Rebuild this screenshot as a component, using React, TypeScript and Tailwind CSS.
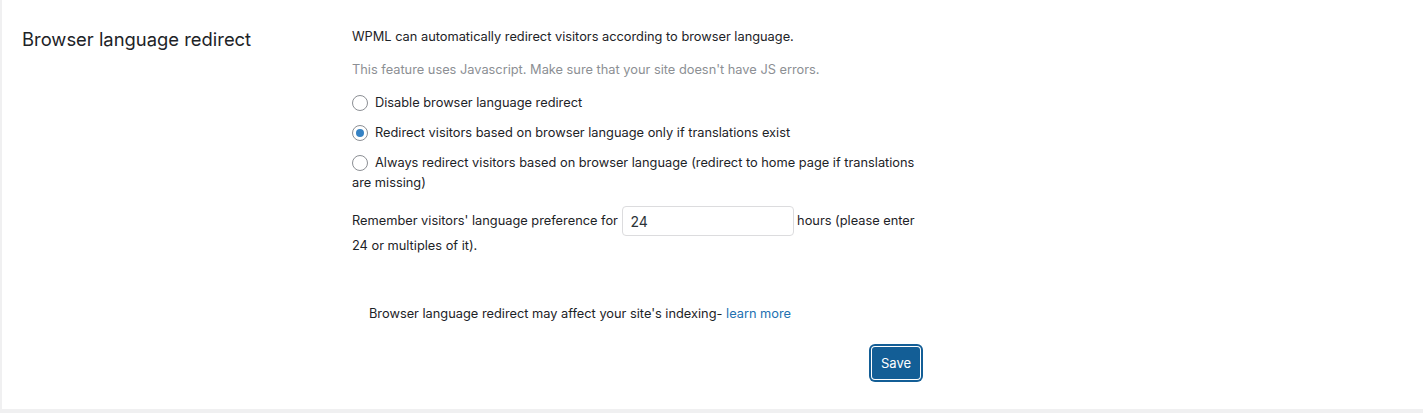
import React, { useState } from "react";

const options = [
  { id: "disable", label: "Disable browser language redirect" },
  {
    id: "exists",
    label: "Redirect visitors based on browser language only if translations exist",
  },
  {
    id: "always",
    label:
      "Always redirect visitors based on browser language (redirect to home page if translations are missing)",
  },
];

export default function App() {
  const [mode, setMode] = useState("exists");
  const [hours, setHours] = useState("24");

  return (
    <div className="min-h-[413px] w-full bg-[#f0f0f1] pl-[2px] pb-[4px] font-['Inter','Liberation_Sans',Arial,sans-serif] text-[12.8px] leading-[20px] text-[#1d2327]">
      <div className="flex min-h-[409px] bg-white pl-[20px] pt-[27px]">
        <div className="w-[330px] shrink-0">
          <h3 className="-mt-[1px] text-[18.4px] leading-[26px] font-normal text-[#1d2327]">
            Browser language redirect
          </h3>
        </div>

        <div className="w-[570px] shrink-0">
          <p className="mb-[13px]">
            WPML can automatically redirect visitors according to browser language.
          </p>
          <p className="mb-[13px] text-[#8c8f94]">
            This feature uses Javascript. Make sure that your site doesn't have JS errors.
          </p>

          <ul className="flex flex-col gap-[10px]">
            {options.map((o) => (
              <li key={o.id}>
                <label className="cursor-pointer">
                  <input
                    type="radio"
                    name="redirect"
                    checked={mode === o.id}
                    onChange={() => setMode(o.id)}
                    className="sr-only"
                  />
                  <span className="mr-[7px] inline-flex h-[16px] w-[16px] -translate-y-[1px] items-center justify-center rounded-full border border-[#8c8f94] bg-white align-middle">
                    {mode === o.id && (
                      <span className="h-[8px] w-[8px] rounded-full bg-[#3582c4]" />
                    )}
                  </span>
                  {o.label}
                </label>
              </li>
            ))}
          </ul>

          <div className="mt-[13px] pr-[2px]">
            <span>Remember visitors' language preference for </span>
            <input
              type="text"
              value={hours}
              onChange={(e) => setHours(e.target.value)}
              className="h-[30px] w-[172px] rounded-[4px] border border-[#dcdcde] bg-white px-[8px] align-middle text-[14px] text-[#2c3338] outline-none"
            />
            <span> hours (please enter 24 or multiples of it).</span>
          </div>

          <p className="mt-[48px] pl-[17px]">
            Browser language redirect may affect your site's indexing-{" "}
            <a href="#" className="text-[#2271b1]">
              learn more
            </a>
          </p>

          <div className="mt-[23px] flex justify-end pr-[2px]">
            <button
              type="button"
              className="h-[32px] w-[48px] rounded-[3px] bg-[#135e96] text-[13px] text-white shadow-[0_0_0_1px_#fff,0_0_0_3px_#135e96]"
            >
              Save
            </button>
          </div>
        </div>
      </div>
    </div>
  );
}
